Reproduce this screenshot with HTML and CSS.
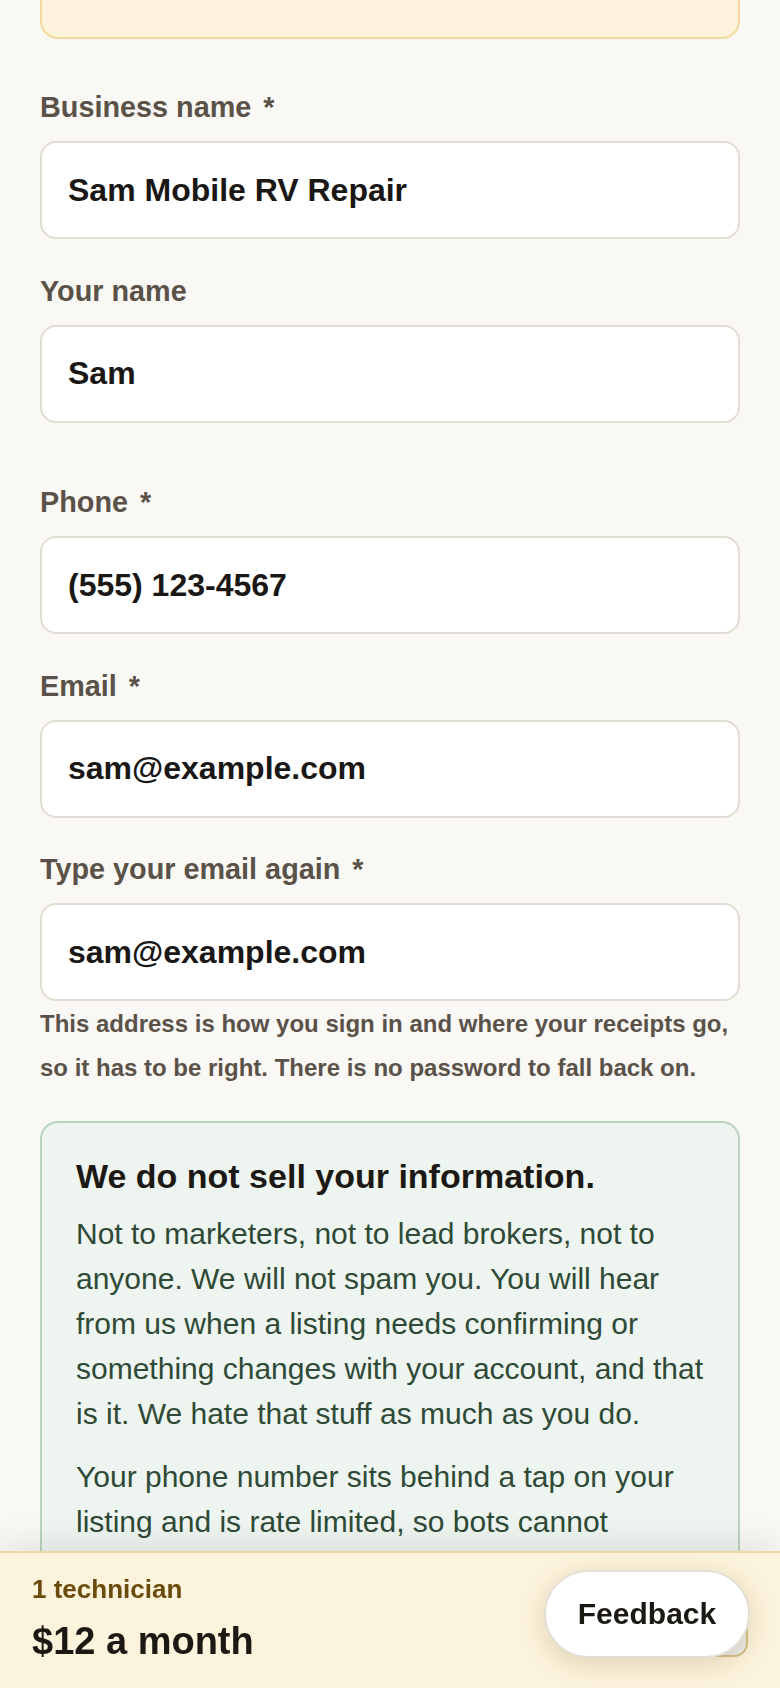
FILE: index.html
```html
<!DOCTYPE html>
<html lang="en">
<head>
<meta charset="utf-8">
<meta name="viewport" content="width=device-width, initial-scale=1">
<title>Sign up</title>
<link rel="stylesheet" href="styles.css">
</head>
<body>
<main class="page">
  <div class="notice"></div>

  <div class="field">
    <label class="label" for="biz">Business name <span class="req">*</span></label>
    <input class="input" id="biz" type="text" value="Sam Mobile RV Repair">
  </div>

  <div class="field">
    <label class="label" for="name">Your name</label>
    <input class="input" id="name" type="text" value="Sam">
  </div>

  <div class="field field-contact">
    <label class="label" for="phone">Phone <span class="req">*</span></label>
    <input class="input" id="phone" type="tel" value="(555) 123-4567">
  </div>

  <div class="field">
    <label class="label" for="email">Email <span class="req">*</span></label>
    <input class="input" id="email" type="email" value="sam@example.com">
  </div>

  <div class="field field-last">
    <label class="label" for="email2">Type your email again <span class="req">*</span></label>
    <input class="input" id="email2" type="email" value="sam@example.com">
  </div>
  <p class="help">This address is how you sign in and where your receipts go, so it has to be right. There is no password to fall back on.</p>

  <section class="privacy">
    <h2 class="privacy-title">We do not sell your information.</h2>
    <p class="privacy-text">Not to marketers, not to lead brokers, not to anyone. We will not spam you. You will hear from us when a listing needs confirming or something changes with your account, and that is it. We hate that stuff as much as you do.</p>
    <p class="privacy-text">Your phone number sits behind a tap on your listing and is rate limited, so bots cannot harvest it. Your email is never shown to the public.</p>
  </section>
</main>

<div class="bar">
  <div class="bar-info">
    <div class="bar-count">1 technician</div>
    <div class="bar-price">$12 a month</div>
  </div>
  <button class="bar-btn" type="button">Next</button>
</div>

<button class="feedback" type="button">Feedback</button>
</body>
</html>
```

FILE: styles.css
```css
html, body {
  margin: 0;
  padding: 0;
  background: #faf8f4;
  font-family: "Liberation Sans", Arial, sans-serif;
}

.page {
  padding: 0 40px 260px;
}

.notice {
  height: 39px;
  box-sizing: border-box;
  background: #fdf3dc;
  border: 2px solid #f0d99b;
  border-top: 0;
  border-radius: 0 0 18px 18px;
  margin-bottom: 52px;
}

.field {
  margin-bottom: 35.5px;
}

.field-contact {
  padding-top: 28px;
}

.field-last {
  margin-bottom: 0;
}

.label {
  display: block;
  font-size: 28.8px;
  line-height: 33px;
  font-weight: 700;
  color: #5a5249;
  margin-bottom: 17px;
}

.req {
  margin-left: 4px;
}

.input {
  display: block;
  width: 100%;
  box-sizing: border-box;
  height: 98px;
  padding: 0 26px;
  border: 2px solid #e2ddd2;
  border-radius: 16px;
  background: #ffffff;
  font-family: "Liberation Sans", Arial, sans-serif;
  font-size: 32px;
  font-weight: 700;
  color: #1a1714;
  outline: none;
}

.help {
  margin: 1px 0 31px;
  font-size: 24px;
  line-height: 44px;
  font-weight: 700;
  color: #5a5249;
}

.privacy {
  background: #eef4ef;
  border: 2px solid #b9d4be;
  border-radius: 18px;
  padding: 34px 30px 34px 34px;
}

.privacy-title {
  margin: 0 0 15px;
  font-size: 34px;
  line-height: 39px;
  font-weight: 700;
  color: #1c1915;
}

.privacy-text {
  margin: 0 0 18px;
  font-size: 30px;
  line-height: 45px;
  color: #2e4a37;
}

.bar {
  position: fixed;
  left: 0;
  right: 0;
  bottom: 0;
  display: flex;
  align-items: center;
  justify-content: space-between;
  padding: 21px 32px 25px;
  background: #fcf3dc;
  border-top: 2px solid #efd9a0;
  box-shadow: 0 -12px 28px rgba(0, 0, 0, 0.07);
}

.bar-count {
  font-size: 26px;
  line-height: 30px;
  font-weight: 700;
  color: #6b4b0c;
  margin-bottom: 15px;
}

.bar-price {
  font-size: 38px;
  line-height: 44px;
  font-weight: 700;
  color: #1c1915;
}

.bar-btn {
  align-self: flex-end;
  width: 150px;
  height: 48px;
  margin-bottom: 6px;
  border: 2px solid #d8c089;
  border-radius: 14px;
  background: #ebebea;
  font-family: "Liberation Sans", Arial, sans-serif;
  font-size: 24px;
  font-weight: 700;
  color: #9a9a98;
}

.feedback {
  position: fixed;
  right: 30px;
  bottom: 30px;
  width: 206px;
  height: 88px;
  border: 2px solid #e4dfd5;
  border-radius: 44px;
  background: #ffffff;
  box-shadow: 0 6px 24px rgba(110, 80, 20, 0.2);
  font-family: "Liberation Sans", Arial, sans-serif;
  font-size: 30px;
  font-weight: 700;
  color: #1c1915;
  padding: 0;
  z-index: 10;
}
```
